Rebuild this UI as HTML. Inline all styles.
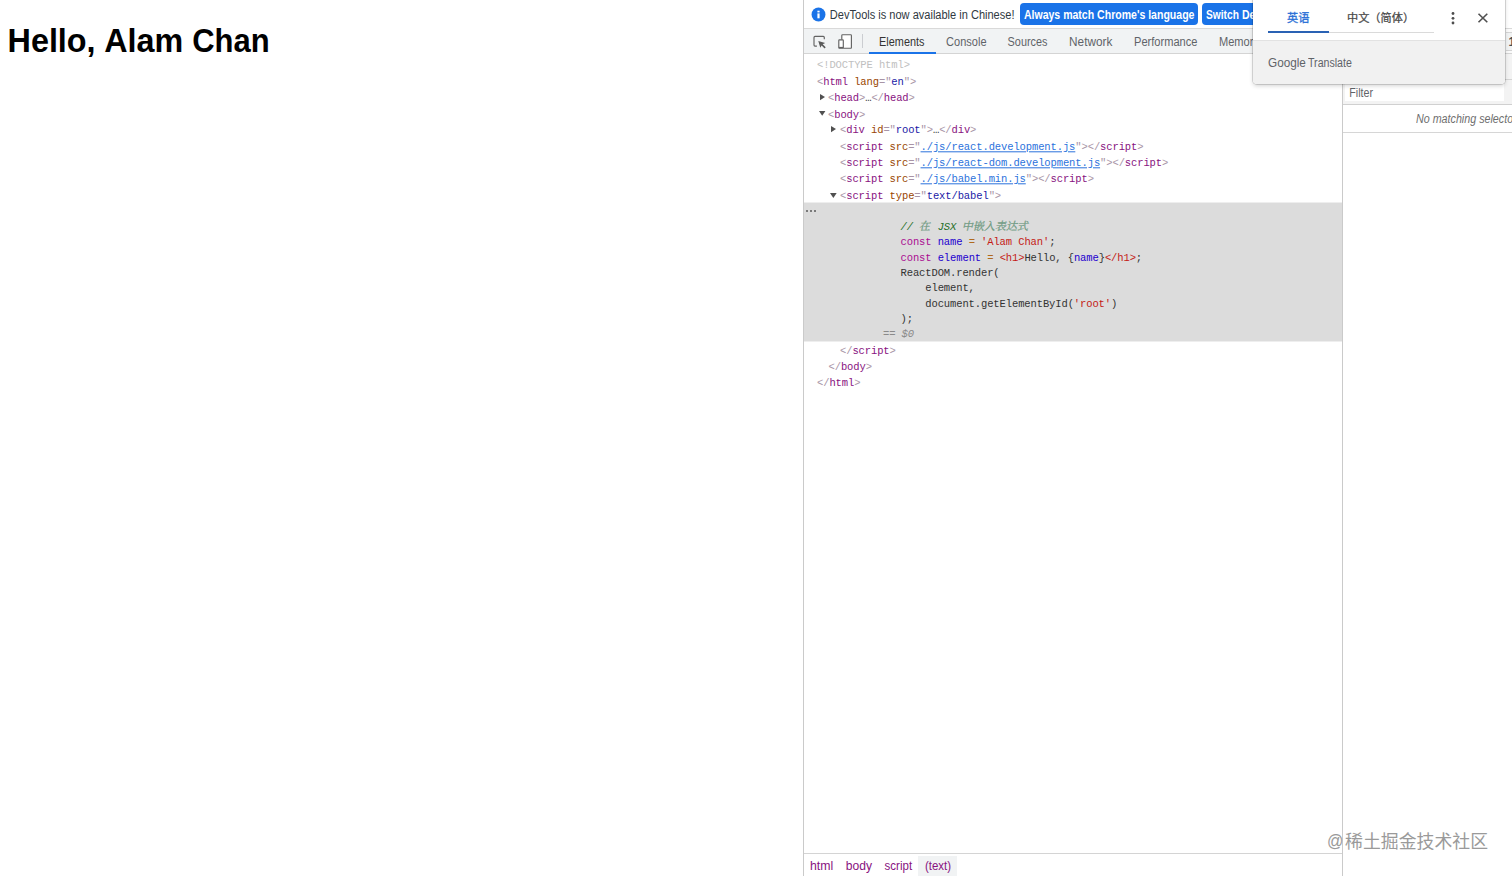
<!DOCTYPE html>
<html lang="en"><head><meta charset="utf-8"><title>Hello</title>
<style>
html,body{margin:0;padding:0}
body{opacity:.999;width:1512px;height:876px;position:relative;overflow:hidden;background:#fff;font-family:"Liberation Sans",sans-serif;font-size:12px;color:#333}
.abs{position:absolute}
.t{position:absolute;white-space:pre;line-height:16px;height:16px;font-size:12px}
.m{position:absolute;white-space:pre;font-family:"Liberation Mono",monospace;font-size:10.5px;letter-spacing:-0.11px;line-height:16px;height:16px;color:#333}
h1{position:absolute;left:0;top:23px;width:400px;height:37px;margin:0;font-size:32.5px;line-height:37px;font-weight:bold;color:#000;white-space:pre}
.tg{color:#881280}.br{color:#a894a6}.an{color:#994500}.av{color:#1a1aa6}
.lk{color:#2b72dc;text-decoration:underline}
.kw{color:#aa0d91}.df{color:#1c00cf}.st{color:#c41a16}.op{color:#b06a1e}.cm{color:#236e25;font-style:italic}
.tab{color:#5f6368}
.hw{position:absolute;top:0;white-space:pre}
#flt{left:1349px!important;transform:translateX(0.22px) scaleX(0.8911);transform-origin:0 0}
#gg{left:1268px!important;transform:translateX(0.00px) scaleX(0.9406);transform-origin:0 0}
#h1a{left:7px!important;transform:translateX(0.53px) scaleX(0.9952);transform-origin:0 0}
#h1b{left:104px!important;transform:translateX(0.19px) scaleX(0.9927);transform-origin:0 0}
#h1c{left:192px!important;transform:translateX(0.21px) scaleX(0.9524);transform-origin:0 0}
#ib{left:829px!important;transform:translateX(0.85px) scaleX(0.9195);transform-origin:0 0}
#b1{left:1023px!important;transform:translateX(0.90px) scaleX(0.878);transform-origin:0 0}
#t1{left:879px!important;transform:translateX(0.11px) scaleX(0.9062);transform-origin:0 0}
#t2{left:946px!important;transform:translateX(0.12px) scaleX(0.9176);transform-origin:0 0}
#t3{left:1007px!important;transform:translateX(0.62px) scaleX(0.9047);transform-origin:0 0}
#t4{left:1069px!important;transform:translateX(0.07px) scaleX(0.9818);transform-origin:0 0}
#t5{left:1134px!important;transform:translateX(0.06px) scaleX(0.9218);transform-origin:0 0}
#bc1{left:809px!important;transform:translateX(0.92px) scaleX(1.0253);transform-origin:0 0}
#bc2{left:845px!important;transform:translateX(0.77px) scaleX(1.0075);transform-origin:0 0}
#bc3{left:884px!important;transform:translateX(0.57px) scaleX(0.9602);transform-origin:0 0}
#bc4{left:924px!important;transform:translateX(0.91px) scaleX(0.956);transform-origin:0 0}
</style></head>
<body>
<h1><span class="hw" id="h1a" style="left:7.5px">Hello,</span><span class="hw" id="h1b" style="left:103px">Alam</span><span class="hw" id="h1c" style="left:191px">Chan</span><span style="position:absolute;left:-9999px">Hello, Alam Chan</span></h1>

<!-- devtools frame -->
<div class="abs" style="left:803px;top:0;width:1px;height:876px;background:#cacaca"></div>
<div class="abs" style="left:804px;top:0;width:708px;height:28px;background:#fff;border-bottom:1px solid #d9d9d9"></div>
<div class="abs" style="left:804px;top:29px;width:708px;height:24px;background:#f1f3f4;border-bottom:1px solid #d4d4d4"></div>

<!-- infobar -->
<svg class="abs" style="left:810.6px;top:6.7px" width="15" height="15" viewBox="0 0 15 15"><circle cx="7.5" cy="7.5" r="6.95" fill="#1a73e8"/><rect x="6.4" y="6.4" width="2.2" height="4.9" fill="#fff"/><rect x="6.4" y="3.7" width="2.2" height="1.7" fill="#fff"/></svg>
<span class="t" id="ib" style="left:830.5px;top:7px;color:#303942">DevTools is now available in Chinese!</span>
<div class="abs" style="left:1020px;top:3px;width:178px;height:22px;background:#1a73e8;border-radius:4px"></div>
<span class="t" id="b1" style="left:1024px;top:7px;color:#fff;font-weight:bold">Always match Chrome's language</span>
<div class="abs" style="left:1202px;top:3px;width:160px;height:22px;background:#1a73e8;border-radius:4px"></div>
<span class="t" id="b2" style="left:1205.5px;top:7px;color:#fff;font-weight:bold;transform:scaleX(.852);transform-origin:0 0">Switch</span>
<span class="t" id="b3" style="left:1242.1px;top:7px;color:#fff;font-weight:bold;transform:scaleX(.8757);transform-origin:0 0">DevTools to Chinese</span>

<!-- toolbar -->
<svg class="abs" style="left:811px;top:34px" width="16" height="16" viewBox="0 0 16 16" fill="none" stroke="#636363" stroke-width="1.15"><path d="M5.9 12.1H4a1 1 0 0 1-1-1V3.4a1 1 0 0 1 1-1h8.3a1 1 0 0 1 1 1V5.2"/><path d="M7.3 6.9L14.2 9L11.7 10.3L14.7 13.3L13.6 14.4L10.6 11.4L9.3 13.7z" fill="#5a5a5a" stroke="none"/></svg>
<svg class="abs" style="left:836px;top:33px" width="18" height="17" viewBox="0 0 18 17" fill="none" stroke="#636363" stroke-width="1.15"><path d="M5.8 6.8V2.4a.7.7 0 0 1 .7-.7h8.2a.7.7 0 0 1 .7.7v12.1a.7.7 0 0 1-.7.7H7.3" fill="#fff"/><rect x="2.8" y="6.8" width="4.5" height="8.4" rx=".6" fill="#fff"/><rect x="2.8" y="13.9" width="4.5" height="1.3" fill="#636363" stroke="none"/></svg>
<div class="abs" style="left:862px;top:34px;width:1px;height:14px;background:#cbcdd1"></div>
<span class="t" id="t1" style="left:880px;top:34px;color:#333">Elements</span>
<div class="abs" style="left:869px;top:51.5px;width:67px;height:2px;background:#1a73e8"></div>
<span class="t tab" id="t2" style="left:946.5px;top:34px">Console</span>
<span class="t tab" id="t3" style="left:1008px;top:34px">Sources</span>
<span class="t tab" id="t4" style="left:1070px;top:34px">Network</span>
<span class="t tab" id="t5" style="left:1135px;top:34px">Performance</span>
<span class="t tab" id="t6" style="left:1219.1px;top:34px;transform:scaleX(.92);transform-origin:0 0">Memory</span>
<span class="t" id="t7" style="left:1508.5px;top:33.5px;color:#4a4d51;font-weight:bold">1</span>

<!-- elements tree -->
<span class="m" id="l1" style="left:817px;top:57px;color:#c0c0c0;transform:translateY(0.3px)">&lt;!DOCTYPE html&gt;</span>
<span class="m" id="l2" style="left:817px;top:73px;transform:translateY(0.6px)"><span class="br">&lt;</span><span class="tg">html</span> <span class="an">lang</span><span class="br">="</span><span class="av">en</span><span class="br">"&gt;</span></span>
<svg class="abs" style="left:819.95px;top:93.7px" width="6" height="7" viewBox="0 0 6 7"><path d="M0 0L5 3.1L0 6.2z" fill="#505050"/></svg>
<span class="m" id="l3" style="left:828px;top:90px;transform:translateY(0.3px)"><span class="br">&lt;</span><span class="tg">head</span><span class="br">&gt;</span>…<span class="br">&lt;/</span><span class="tg">head</span><span class="br">&gt;</span></span>
<svg class="abs" style="left:819.0px;top:111.0px" width="7" height="6" viewBox="0 0 7 6"><path d="M0 0L6.4 0L3.2 4.8z" fill="#505050"/></svg>
<span class="m" id="l4" style="left:828px;top:106px;transform:translateY(0.7px)"><span class="br">&lt;</span><span class="tg">body</span><span class="br">&gt;</span></span>
<svg class="abs" style="left:830.9px;top:125.8px" width="6" height="7" viewBox="0 0 6 7"><path d="M0 0L5 3.1L0 6.2z" fill="#505050"/></svg>
<span class="m" id="l5" style="left:840px;top:122px;transform:translateY(0.3px)"><span class="br">&lt;</span><span class="tg">div</span> <span class="an">id</span><span class="br">="</span><span class="av">root</span><span class="br">"&gt;</span>…<span class="br">&lt;/</span><span class="tg">div</span><span class="br">&gt;</span></span>
<span class="m" id="l6" style="left:840px;top:139px;transform:translateY(0.3px)"><span class="br">&lt;</span><span class="tg">script</span> <span class="an">src</span><span class="br">="</span><span class="lk">./js/react.development.js</span><span class="br">"&gt;&lt;/</span><span class="tg">script</span><span class="br">&gt;</span></span>
<span class="m" id="l7" style="left:840px;top:155px;transform:translateY(0.3px)"><span class="br">&lt;</span><span class="tg">script</span> <span class="an">src</span><span class="br">="</span><span class="lk">./js/react-dom.development.js</span><span class="br">"&gt;&lt;/</span><span class="tg">script</span><span class="br">&gt;</span></span>
<span class="m" id="l8" style="left:840px;top:171px;transform:translateY(0.3px)"><span class="br">&lt;</span><span class="tg">script</span> <span class="an">src</span><span class="br">="</span><span class="lk">./js/babel.min.js</span><span class="br">"&gt;&lt;/</span><span class="tg">script</span><span class="br">&gt;</span></span>
<svg class="abs" style="left:830.2px;top:192.5px" width="7" height="6" viewBox="0 0 7 6"><path d="M0 0L6.7 0L3.35 5.1z" fill="#505050"/></svg>
<span class="m" id="l9" style="left:840px;top:188px"><span class="br">&lt;</span><span class="tg">script</span> <span class="an">type</span><span class="br">="</span><span class="av">text/babel</span><span class="br">"&gt;</span></span>

<!-- selected text node -->
<div class="abs" style="left:804px;top:202px;width:538px;height:140px;background:#eee"></div>
<div class="abs" style="left:804px;top:203px;width:538px;height:138px;background:#dcdcdc"></div>
<div class="abs" id="dots" style="left:806px;top:210px;width:10px;height:2px"><i class="abs" style="left:0;top:0;width:2px;height:2px;background:#7a7a7a"></i><i class="abs" style="left:4px;top:0;width:2px;height:2px;background:#7a7a7a"></i><i class="abs" style="left:8px;top:0;width:2px;height:2px;background:#7a7a7a"></i></div>
<span class="m cm" id="c1" style="left:900.5px;top:218.5px">//    JSX</span>
<svg class="abs" style="left:919.0px;top:219.0px;overflow:visible" width="11.00" height="14.30" viewBox="0 0 11.00 14.30"><text transform="translate(0,11.0) skewX(-12)" x="0" y="0" font-size="11" fill="#6f9a82" stroke="#6f9a82" stroke-width="0.24" font-family="'Liberation Mono','Noto Serif CJK SC',monospace">在</text></svg>
<svg class="abs" style="left:962.0px;top:219.0px;overflow:visible" width="66.00" height="14.30" viewBox="0 0 66.00 14.30"><text transform="translate(0,11.0) skewX(-12)" x="0" y="0" font-size="11" fill="#6f9a82" stroke="#6f9a82" stroke-width="0.24" font-family="'Liberation Mono','Noto Serif CJK SC',monospace">中嵌入表达式</text></svg>
<span class="m" id="c2" style="left:900.5px;top:234px;transform:translateY(.4px)"><span class="kw">const</span> <span class="df">name</span> <span class="op">=</span> <span class="st">'Alam Chan'</span>;</span>
<span class="m" id="c3" style="left:900.5px;top:249.5px;transform:translateY(.4px)"><span class="kw">const</span> <span class="df">element</span> <span class="op">=</span> <span class="st">&lt;h1&gt;</span>Hello, {<span class="df">name</span>}<span class="st">&lt;/h1&gt;</span>;</span>
<span class="m" id="c4" style="left:900.5px;top:265px;transform:translateY(.4px)">ReactDOM.render(</span>
<span class="m" id="c5" style="left:900.5px;top:280px;transform:translateY(.4px)">    element,</span>
<span class="m" id="c6" style="left:900.5px;top:295.5px;transform:translateY(.4px)">    document.getElementById(<span class="st">'root'</span>)</span>
<span class="m" id="c7" style="left:900.5px;top:311px;transform:translateY(.4px)">);</span>
<span class="m" id="c8" style="left:883px;top:326px;color:#8a8a8a;font-style:italic">== $0</span>
<span class="m" id="l10" style="left:840px;top:343px;transform:translateY(.4px)"><span class="br">&lt;/</span><span class="tg">script</span><span class="br">&gt;</span></span>
<span class="m" id="l11" style="left:828.5px;top:359px;transform:translateY(.4px)"><span class="br">&lt;/</span><span class="tg">body</span><span class="br">&gt;</span></span>
<span class="m" id="l12" style="left:817px;top:375px"><span class="br">&lt;/</span><span class="tg">html</span><span class="br">&gt;</span></span>

<!-- breadcrumbs -->
<div class="abs" style="left:804px;top:853px;width:538px;height:1px;background:#d4d4d4"></div>
<div class="abs" style="left:918px;top:856px;width:38.5px;height:20px;background:#f1f3f4"></div>
<span class="t tg" id="bc1" style="left:810.5px;top:858px">html</span>
<span class="t tg" id="bc2" style="left:846.5px;top:858px">body</span>
<span class="t tg" id="bc3" style="left:885px;top:858px">script</span>
<span class="t tg" id="bc4" style="left:925.5px;top:858px">(text)</span>

<!-- right pane -->
<div class="abs" style="left:1342px;top:54px;width:1px;height:822px;background:#cacaca"></div>
<div class="abs" style="left:1343px;top:54px;width:169px;height:50px;background:#f3f3f3;border-bottom:1px solid #d0d0d0"></div>
<div class="abs" style="left:1345px;top:84px;width:159px;height:17px;background:#fff"></div>
<span class="t" id="flt" style="left:1349.5px;top:85px;color:#5f6368">Filter</span>
<span class="t" id="nms" style="left:1415.7px;top:111px;color:#6e6e6e;font-style:italic;transform:scaleX(.893);transform-origin:0 0">No matching selector or style</span>
<div class="abs" style="left:1343px;top:132px;width:169px;height:1px;background:#d6d6d6"></div>

<!-- watermark -->
<span class="t" id="wm" style="left:1327px;top:830px;font-size:18px;line-height:22px;height:22px;color:#9a9a9a;transform:scaleX(.9);transform-origin:0 0">@</span>
<svg class="abs" style="left:1344.5px;top:829.6px;overflow:visible" width="143.20" height="23.27" viewBox="0 0 143.20 23.27"><text x="0" y="17.9" font-size="17.9" fill="#9a9a9a" font-family="'Liberation Sans','Noto Sans CJK SC',sans-serif">稀土掘金技术社区</text></svg>

<!-- strip right of popup -->
<div class="abs" style="left:1343px;top:79px;width:169px;height:1px;background:#d4d4d4"></div>
<div class="abs" style="left:1506px;top:29px;width:6px;height:3px;background:#fbfbfb"></div>
<div class="abs" style="left:1506px;top:32px;width:6px;height:1px;background:#d4d4d4"></div>
<div class="abs" style="left:1506px;top:50px;width:6px;height:1px;background:#d4d4d4"></div>
<div class="abs" style="left:1506px;top:51px;width:6px;height:2px;background:#fafafa"></div>
<!-- translate popup -->
<div class="abs" style="left:1253px;top:-8px;width:252px;height:92px;background:#fff;border-radius:4px;box-shadow:0 0 0 1px rgba(0,0,0,.13),0 2px 4px rgba(0,0,0,.17);overflow:hidden">
  <div class="abs" style="left:0;top:48px;width:252px;height:44px;background:#f1f1f1;border-top:1px solid #e2e2e2"></div>
</div>
<svg class="abs" style="left:1287.0px;top:11.3px;overflow:visible" width="22.40" height="14.56" viewBox="0 0 22.40 14.56"><text x="0" y="11.2" font-size="11.2" fill="#2a6fd6" stroke="#2a6fd6" stroke-width="0.3" font-family="'Liberation Sans','Noto Sans CJK SC',sans-serif">英语</text></svg>
<div class="abs" style="left:1268px;top:31px;width:61px;height:2px;background:#2a62b4"></div>
<div class="abs" style="left:1329px;top:32px;width:105px;height:1px;background:#dadada"></div>
<svg class="abs" style="left:1347.0px;top:11.3px;overflow:visible" width="67.20" height="14.56" viewBox="0 0 67.20 14.56"><text x="0" y="11.2" font-size="11.2" fill="#484848" stroke="#484848" stroke-width="0.25" font-family="'Liberation Sans','Noto Sans CJK SC',sans-serif">中文（简体）</text></svg>
<svg class="abs" style="left:1451.2px;top:12px" width="4" height="13" viewBox="0 0 4 13"><circle cx="2" cy="1.5" r="1.4" fill="#4d4d4d"/><circle cx="2" cy="6.3" r="1.4" fill="#4d4d4d"/><circle cx="2" cy="11" r="1.4" fill="#4d4d4d"/></svg>
<svg class="abs" style="left:1477px;top:12px" width="12" height="12" viewBox="0 0 12 12"><path d="M1.5 1.7L10.3 10.3M10.3 1.7L1.5 10.3" stroke="#505050" stroke-width="1.6" fill="none"/></svg>
<span class="t" id="gg" style="left:1268px;top:55px;font-size:12.5px;color:#5f6368">Google</span>
<span class="t" id="tr" style="left:1308.3px;top:55px;font-size:12px;transform:scaleX(.885);transform-origin:0 0;color:#5f6368">Translate</span>
</body></html>
